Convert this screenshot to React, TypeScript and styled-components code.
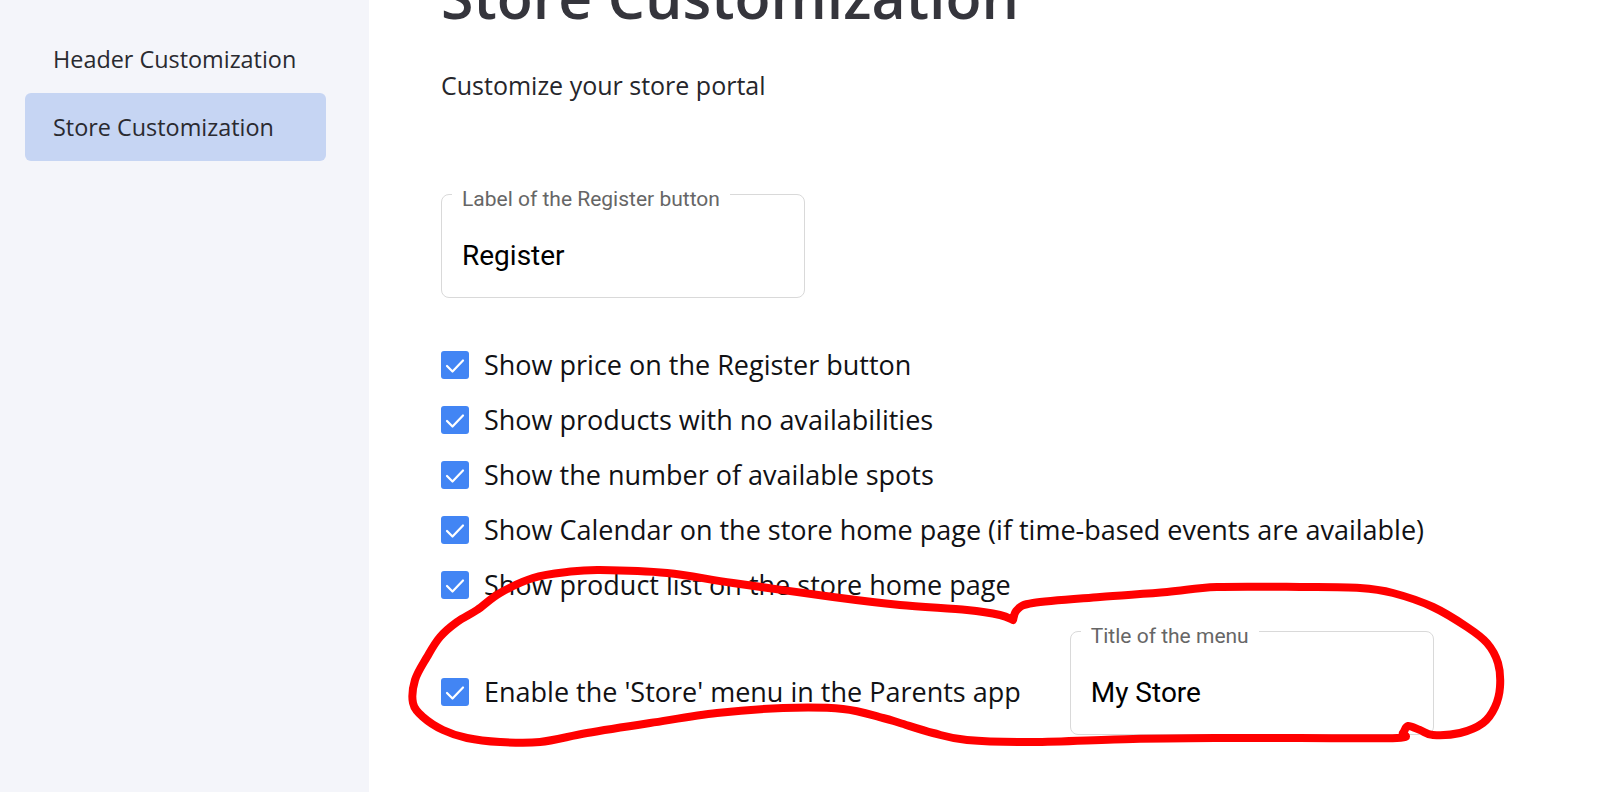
import React from 'react';
import styled, {createGlobalStyle} from 'styled-components';

const GlobalStyle = createGlobalStyle`
    html, body {
        margin: 0;
        padding: 0;
        background: #ffffff;
    }
    body {
        font-family: 'Open Sans', 'Liberation Sans', sans-serif;
        color: #1f1f24;
    }
`;

const Page = styled.div`
    position: relative;
    display: flex;
    height: 792px;
    overflow: hidden;
`;

const Sidebar = styled.nav`
    flex: 0 0 369px;
    box-sizing: border-box;
    padding: 25px 0 0 25px;
    background: #f4f5fa;
`;

const NavItem = styled.div<{$active?: boolean}>`
    width: 301px;
    height: 68px;
    box-sizing: border-box;
    padding-left: 28px;
    border-radius: 6px;
    background: ${p => (p.$active ? '#c6d5f3' : 'transparent')};
    font-size: 23.4px;
    line-height: 68px;
    color: #2a2a30;
    white-space: nowrap;
`;

const Main = styled.main`
    flex: 1 1 auto;
    padding-left: 72px;
`;

const Title = styled.h1`
    margin: -33px 0 0;
    font-size: 59px;
    font-weight: 600;
    line-height: 59px;
    color: #35353c;
    white-space: nowrap;
`;

const Subtitle = styled.p`
    margin: 42px 0 0;
    font-size: 25px;
    line-height: 34px;
    color: #26262b;
`;

const Field = styled.fieldset<{$top?: number}>`
    box-sizing: border-box;
    width: 364px;
    min-inline-size: 0;
    margin: ${p => p.$top ?? 0}px 0 0;
    padding: 28px 20px 25px;
    border: 1px solid #d9d9d9;
    border-radius: 8px;
    flex: 0 0 auto;
`;

const FieldLegend = styled.legend`
    margin-left: -10px;
    padding: 11px 10px 0;
    font-family: Roboto, 'Liberation Sans', sans-serif;
    font-size: 21px;
    line-height: 21px;
    color: #666666;
`;

const FieldInput = styled.input`
    display: block;
    width: 100%;
    height: 34px;
    margin: 0;
    padding: 0;
    border: 0;
    outline: none;
    background: transparent;
    font-family: Roboto, 'Liberation Sans', sans-serif;
    font-size: 28px;
    color: #000000;
`;

const Checklist = styled.div`
    display: flex;
    flex-direction: column;
    gap: 5px;
    margin-top: 42px;
`;

const CheckRow = styled.label<{$offset?: number}>`
    display: flex;
    align-items: center;
    gap: 15px;
    min-height: 50px;
    margin-bottom: ${p => p.$offset ?? 0}px;
    font-size: 27px;
    line-height: 28px;
    color: #111114;
    white-space: nowrap;
`;

const FieldRow = styled.div`
    display: flex;
    align-items: flex-end;
    gap: 49px;
`;

const Box = styled.span`
    display: inline-flex;
    align-items: center;
    justify-content: center;
    flex: 0 0 28px;
    width: 28px;
    height: 28px;
    border-radius: 3px;
    background: #4285f4;
`;

const Scribble = styled.svg`
    position: absolute;
    left: 0;
    top: 0;
    pointer-events: none;
`;

function Checkbox() {
    return (
        <Box>
            <svg width='28' height='28' viewBox='0 0 28 28'>
                <path
                    d='M6 15 L11.5 20.5 L22 9.5'
                    fill='none'
                    stroke='#ffffff'
                    strokeWidth='2.2'
                    strokeLinecap='round'
                    strokeLinejoin='round'
                />
            </svg>
        </Box>
    );
}

const loop: [number, number][] = [
    [1013, 620], [1017, 610], [1033, 603], [1100, 597], [1167, 592], [1217, 587],
    [1300, 587], [1360, 588], [1393, 593], [1433, 607], [1467, 627], [1487, 643],
    [1498, 663], [1500, 687], [1495, 707], [1483, 723], [1460, 733], [1433, 735],
    [1420, 730], [1408, 726], [1403, 733], [1397, 738], [1300, 738], [1233, 738],
    [1133, 739], [1033, 742], [967, 740], [933, 733], [900, 723], [883, 718],
    [843, 709], [783, 708], [717, 713], [650, 723], [587, 733], [540, 742],
    [500, 742], [467, 738], [443, 730], [423, 717], [413, 703], [415, 680],
    [427, 657], [440, 637], [457, 622], [477, 610], [500, 593], [533, 578],
    [567, 572], [600, 570], [667, 573], [733, 583], [833, 597], [900, 605],
    [967, 610], [1000, 615], [1013, 620],
];

// catmull-rom through the traced points
function smooth(pts: [number, number][]) {
    let d = `M${pts[0][0]} ${pts[0][1]}`;
    for (let i = 0; i < pts.length - 1; i++) {
        const p0 = pts[i - 1] || pts[i];
        const p1 = pts[i];
        const p2 = pts[i + 1];
        const p3 = pts[i + 2] || p2;
        const c1x = p1[0] + (p2[0] - p0[0]) / 6;
        const c1y = p1[1] + (p2[1] - p0[1]) / 6;
        const c2x = p2[0] - (p3[0] - p1[0]) / 6;
        const c2y = p2[1] - (p3[1] - p1[1]) / 6;
        d += ` C${c1x.toFixed(1)} ${c1y.toFixed(1)} ${c2x.toFixed(1)} ${c2y.toFixed(1)} ${p2[0]} ${p2[1]}`;
    }
    return d;
}

const options = [
    'Show price on the Register button',
    'Show products with no availabilities',
    'Show the number of available spots',
    'Show Calendar on the store home page (if time-based events are available)',
    'Show product list on the store home page',
];

export default function App() {
    return (
        <>
            <GlobalStyle/>
            <Page>
                <Sidebar>
                    <NavItem>Header Customization</NavItem>
                    <NavItem $active>Store Customization</NavItem>
                </Sidebar>
                <Main>
                    <Title>Store Customization</Title>
                    <Subtitle>Customize your store portal</Subtitle>
                    <Field $top={76}>
                        <FieldLegend>Label of the Register button</FieldLegend>
                        <FieldInput readOnly defaultValue='Register'/>
                    </Field>
                    <Checklist>
                        {options.map(text => (
                            <CheckRow key={text}>
                                <Checkbox/>
                                {text}
                            </CheckRow>
                        ))}
                        <FieldRow>
                            <CheckRow $offset={18}>
                                <Checkbox/>
                                Enable the 'Store' menu in the Parents app
                            </CheckRow>
                            <Field>
                                <FieldLegend>Title of the menu</FieldLegend>
                                <FieldInput readOnly defaultValue='My Store'/>
                            </Field>
                        </FieldRow>
                    </Checklist>
                </Main>
                <Scribble width='1600' height='792' viewBox='0 0 1600 792'>
                    <path
                        d={smooth(loop)}
                        fill='none'
                        stroke='#ff0000'
                        strokeWidth='8'
                        strokeLinecap='round'
                        strokeLinejoin='round'
                    />
                </Scribble>
            </Page>
        </>
    );
}
